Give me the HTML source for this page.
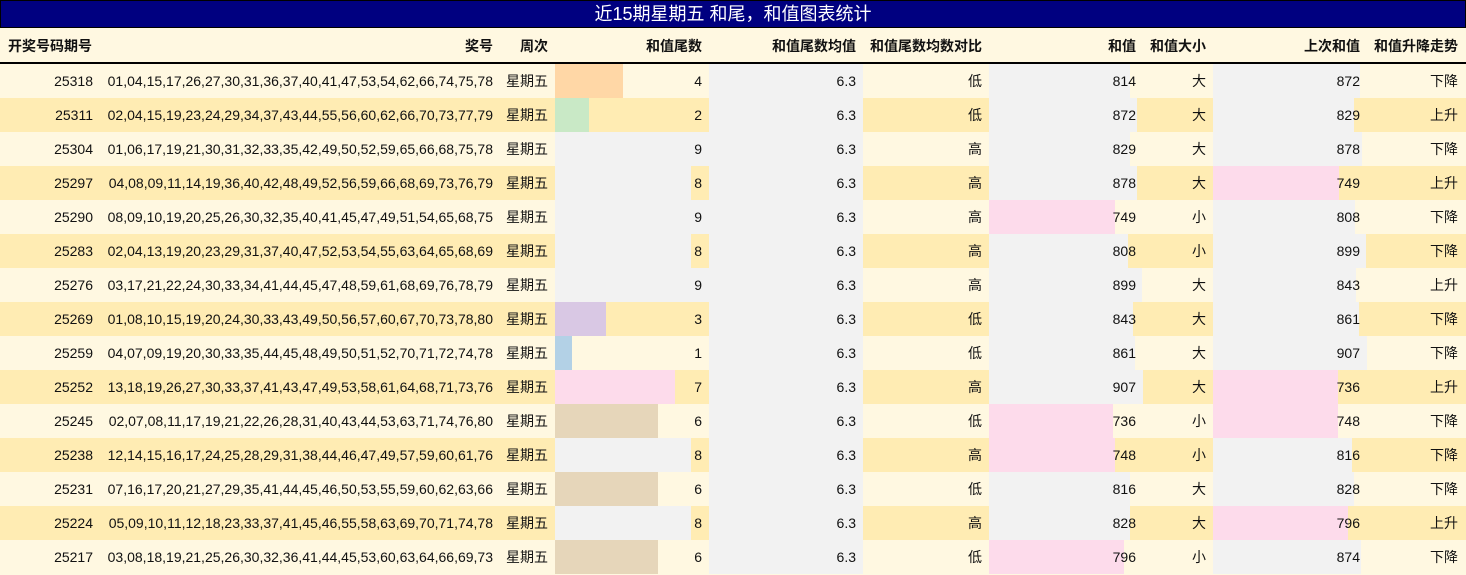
<!DOCTYPE html>
<html><head><meta charset="utf-8"><style>
*{margin:0;padding:0;box-sizing:border-box}
body{width:1466px;height:575px;overflow:hidden;background:#fff8e1;font-family:"Liberation Sans","Noto Sans CJK SC",sans-serif;font-size:14px;color:#111;position:relative}
.t{position:absolute;left:0;top:0;width:1466px;height:28px;background:#000080;border:1px solid #000;color:#fff;font-size:18px;text-align:center;line-height:27px}
.h{position:absolute;left:0;top:28px;width:1466px;height:36px;background:#fff8e1;border-bottom:2px solid #000;font-weight:bold}
.r{position:absolute;left:0;width:1466px;height:34px}
.o{background:#fff8e1}.e{background:#ffecb3}
.b{position:absolute;top:0;height:34px}
.g{background:#f2f2f2}
.c{position:absolute;top:0;line-height:34px;text-align:right;white-space:nowrap}
.h .c{line-height:36px}
.c1{left:0;width:93px}.c2{left:100px;width:393px}.c3{left:500px;width:48px}.c4{left:555px;width:147px}.c5{left:709px;width:147px}.c6{left:863px;width:119px}.c7{left:989px;width:147px}.c8{left:1143px;width:63px}.c9{left:1213px;width:147px}.c10{left:1367px;width:91px}
.h .c1{text-align:left;left:8px}
</style></head><body>
<div class="t">近15期星期五 和尾，和值图表统计</div>
<div class="h"><span class="c c1">开奖号码期号</span><span class="c c2">奖号</span><span class="c c3">周次</span><span class="c c4">和值尾数</span><span class="c c5">和值尾数均值</span><span class="c c6">和值尾数均数对比</span><span class="c c7">和值</span><span class="c c8">和值大小</span><span class="c c9">上次和值</span><span class="c c10">和值升降走势</span></div>

<div class="r o" style="top:64px"><div class="b" style="left:555px;width:68px;background:#ffd7a6"></div><div class="b g" style="left:709px;width:154px"></div><div class="b g" style="left:989px;width:141px"></div><div class="b g" style="left:1213px;width:147px"></div>
<span class="c c1">25318</span><span class="c c2">01,04,15,17,26,27,30,31,36,37,40,41,47,53,54,62,66,74,75,78</span><span class="c c3">星期五</span><span class="c c4">4</span><span class="c c5">6.3</span><span class="c c6">低</span><span class="c c7">814</span><span class="c c8">大</span><span class="c c9">872</span><span class="c c10">下降</span></div>

<div class="r e" style="top:98px"><div class="b" style="left:555px;width:34px;background:#c9e9c6"></div><div class="b g" style="left:709px;width:154px"></div><div class="b g" style="left:989px;width:148px"></div><div class="b g" style="left:1213px;width:141px"></div>
<span class="c c1">25311</span><span class="c c2">02,04,15,19,23,24,29,34,37,43,44,55,56,60,62,66,70,73,77,79</span><span class="c c3">星期五</span><span class="c c4">2</span><span class="c c5">6.3</span><span class="c c6">低</span><span class="c c7">872</span><span class="c c8">大</span><span class="c c9">829</span><span class="c c10">上升</span></div>

<div class="r o" style="top:132px"><div class="b g" style="left:555px;width:154px"></div><div class="b g" style="left:709px;width:154px"></div><div class="b g" style="left:989px;width:141px"></div><div class="b g" style="left:1213px;width:149px"></div>
<span class="c c1">25304</span><span class="c c2">01,06,17,19,21,30,31,32,33,35,42,49,50,52,59,65,66,68,75,78</span><span class="c c3">星期五</span><span class="c c4">9</span><span class="c c5">6.3</span><span class="c c6">高</span><span class="c c7">829</span><span class="c c8">大</span><span class="c c9">878</span><span class="c c10">下降</span></div>

<div class="r e" style="top:166px"><div class="b g" style="left:555px;width:136px"></div><div class="b g" style="left:709px;width:154px"></div><div class="b g" style="left:989px;width:148px"></div><div class="b" style="left:1213px;width:126px;background:#fddbeb"></div>
<span class="c c1">25297</span><span class="c c2">04,08,09,11,14,19,36,40,42,48,49,52,56,59,66,68,69,73,76,79</span><span class="c c3">星期五</span><span class="c c4">8</span><span class="c c5">6.3</span><span class="c c6">高</span><span class="c c7">878</span><span class="c c8">大</span><span class="c c9">749</span><span class="c c10">上升</span></div>

<div class="r o" style="top:200px"><div class="b g" style="left:555px;width:154px"></div><div class="b g" style="left:709px;width:154px"></div><div class="b" style="left:989px;width:126px;background:#fddbeb"></div><div class="b g" style="left:1213px;width:142px"></div>
<span class="c c1">25290</span><span class="c c2">08,09,10,19,20,25,26,30,32,35,40,41,45,47,49,51,54,65,68,75</span><span class="c c3">星期五</span><span class="c c4">9</span><span class="c c5">6.3</span><span class="c c6">高</span><span class="c c7">749</span><span class="c c8">小</span><span class="c c9">808</span><span class="c c10">下降</span></div>

<div class="r e" style="top:234px"><div class="b g" style="left:555px;width:136px"></div><div class="b g" style="left:709px;width:154px"></div><div class="b g" style="left:989px;width:139px"></div><div class="b g" style="left:1213px;width:153px"></div>
<span class="c c1">25283</span><span class="c c2">02,04,13,19,20,23,29,31,37,40,47,52,53,54,55,63,64,65,68,69</span><span class="c c3">星期五</span><span class="c c4">8</span><span class="c c5">6.3</span><span class="c c6">高</span><span class="c c7">808</span><span class="c c8">小</span><span class="c c9">899</span><span class="c c10">下降</span></div>

<div class="r o" style="top:268px"><div class="b g" style="left:555px;width:154px"></div><div class="b g" style="left:709px;width:154px"></div><div class="b g" style="left:989px;width:153px"></div><div class="b g" style="left:1213px;width:143px"></div>
<span class="c c1">25276</span><span class="c c2">03,17,21,22,24,30,33,34,41,44,45,47,48,59,61,68,69,76,78,79</span><span class="c c3">星期五</span><span class="c c4">9</span><span class="c c5">6.3</span><span class="c c6">高</span><span class="c c7">899</span><span class="c c8">大</span><span class="c c9">843</span><span class="c c10">上升</span></div>

<div class="r e" style="top:302px"><div class="b" style="left:555px;width:51px;background:#d9c8e4"></div><div class="b g" style="left:709px;width:154px"></div><div class="b g" style="left:989px;width:144px"></div><div class="b g" style="left:1213px;width:146px"></div>
<span class="c c1">25269</span><span class="c c2">01,08,10,15,19,20,24,30,33,43,49,50,56,57,60,67,70,73,78,80</span><span class="c c3">星期五</span><span class="c c4">3</span><span class="c c5">6.3</span><span class="c c6">低</span><span class="c c7">843</span><span class="c c8">大</span><span class="c c9">861</span><span class="c c10">下降</span></div>

<div class="r o" style="top:336px"><div class="b" style="left:555px;width:17px;background:#b3d1e6"></div><div class="b g" style="left:709px;width:154px"></div><div class="b g" style="left:989px;width:146px"></div><div class="b g" style="left:1213px;width:154px"></div>
<span class="c c1">25259</span><span class="c c2">04,07,09,19,20,30,33,35,44,45,48,49,50,51,52,70,71,72,74,78</span><span class="c c3">星期五</span><span class="c c4">1</span><span class="c c5">6.3</span><span class="c c6">低</span><span class="c c7">861</span><span class="c c8">大</span><span class="c c9">907</span><span class="c c10">下降</span></div>

<div class="r e" style="top:370px"><div class="b" style="left:555px;width:120px;background:#fddbeb"></div><div class="b g" style="left:709px;width:154px"></div><div class="b g" style="left:989px;width:154px"></div><div class="b" style="left:1213px;width:125px;background:#fddbeb"></div>
<span class="c c1">25252</span><span class="c c2">13,18,19,26,27,30,33,37,41,43,47,49,53,58,61,64,68,71,73,76</span><span class="c c3">星期五</span><span class="c c4">7</span><span class="c c5">6.3</span><span class="c c6">高</span><span class="c c7">907</span><span class="c c8">大</span><span class="c c9">736</span><span class="c c10">上升</span></div>

<div class="r o" style="top:404px"><div class="b" style="left:555px;width:103px;background:#e6d6ba"></div><div class="b g" style="left:709px;width:154px"></div><div class="b" style="left:989px;width:124px;background:#fddbeb"></div><div class="b" style="left:1213px;width:125px;background:#fddbeb"></div>
<span class="c c1">25245</span><span class="c c2">02,07,08,11,17,19,21,22,26,28,31,40,43,44,53,63,71,74,76,80</span><span class="c c3">星期五</span><span class="c c4">6</span><span class="c c5">6.3</span><span class="c c6">低</span><span class="c c7">736</span><span class="c c8">小</span><span class="c c9">748</span><span class="c c10">下降</span></div>

<div class="r e" style="top:438px"><div class="b g" style="left:555px;width:136px"></div><div class="b g" style="left:709px;width:154px"></div><div class="b" style="left:989px;width:126px;background:#fddbeb"></div><div class="b g" style="left:1213px;width:139px"></div>
<span class="c c1">25238</span><span class="c c2">12,14,15,16,17,24,25,28,29,31,38,44,46,47,49,57,59,60,61,76</span><span class="c c3">星期五</span><span class="c c4">8</span><span class="c c5">6.3</span><span class="c c6">高</span><span class="c c7">748</span><span class="c c8">小</span><span class="c c9">816</span><span class="c c10">下降</span></div>

<div class="r o" style="top:472px"><div class="b" style="left:555px;width:103px;background:#e6d6ba"></div><div class="b g" style="left:709px;width:154px"></div><div class="b g" style="left:989px;width:141px"></div><div class="b g" style="left:1213px;width:141px"></div>
<span class="c c1">25231</span><span class="c c2">07,16,17,20,21,27,29,35,41,44,45,46,50,53,55,59,60,62,63,66</span><span class="c c3">星期五</span><span class="c c4">6</span><span class="c c5">6.3</span><span class="c c6">低</span><span class="c c7">816</span><span class="c c8">大</span><span class="c c9">828</span><span class="c c10">下降</span></div>

<div class="r e" style="top:506px"><div class="b g" style="left:555px;width:136px"></div><div class="b g" style="left:709px;width:154px"></div><div class="b g" style="left:989px;width:141px"></div><div class="b" style="left:1213px;width:135px;background:#fddbeb"></div>
<span class="c c1">25224</span><span class="c c2">05,09,10,11,12,18,23,33,37,41,45,46,55,58,63,69,70,71,74,78</span><span class="c c3">星期五</span><span class="c c4">8</span><span class="c c5">6.3</span><span class="c c6">高</span><span class="c c7">828</span><span class="c c8">大</span><span class="c c9">796</span><span class="c c10">上升</span></div>

<div class="r o" style="top:540px"><div class="b" style="left:555px;width:103px;background:#e6d6ba"></div><div class="b g" style="left:709px;width:154px"></div><div class="b" style="left:989px;width:135px;background:#fddbeb"></div><div class="b g" style="left:1213px;width:148px"></div>
<span class="c c1">25217</span><span class="c c2">03,08,18,19,21,25,26,30,32,36,41,44,45,53,60,63,64,66,69,73</span><span class="c c3">星期五</span><span class="c c4">6</span><span class="c c5">6.3</span><span class="c c6">低</span><span class="c c7">796</span><span class="c c8">小</span><span class="c c9">874</span><span class="c c10">下降</span></div>
</body></html>
